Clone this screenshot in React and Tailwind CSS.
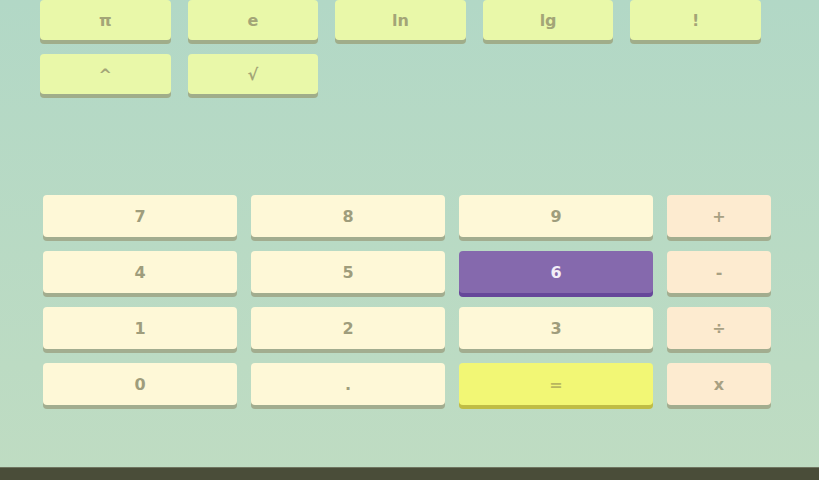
import React from "react";

const fnRows = [
  ["π", "e", "ln", "lg", "!"],
  ["^", "√"],
];

const numRows = [
  ["7", "8", "9", "+"],
  ["4", "5", "6", "-"],
  ["1", "2", "3", "÷"],
  ["0", ".", "=", "x"],
];

const keyStyle = (label, col) => {
  if (label === "6") return "bg-[#8569ad] text-[#f3eef8] shadow-[0_4px_0_#66479a]";
  if (label === "=") return "bg-[#f2f775] text-[#b9b65e] shadow-[0_4px_0_#bfbd45]";
  if (col === 3) return "bg-[#fdebd0] text-[#a8a082] shadow-[0_4px_0_#a2ad8f]";
  return "bg-[#fef8d7] text-[#9f9d7c] shadow-[0_4px_0_#a2ad8f]";
};

const App = () => {
  return (
    <div
      className="h-[480px] w-[819px] overflow-hidden flex flex-col bg-gradient-to-b from-[#b2d8c6] to-[#bfdcc2]"
      style={{ fontFamily: '"DejaVu Sans", Verdana, sans-serif' }}
    >
      {/* scientific keys */}
      <div className="px-[40px] flex flex-col gap-[14px] w-[801px]">
        {fnRows.map((row, i) => (
          <div key={i} className="grid grid-cols-5 gap-x-[17px]">
            {row.map((k) => (
              <button
                key={k}
                className="h-[40px] pt-[1px] rounded-[4px] bg-[#e9f8a9] text-[#a3a577] font-bold text-[16px] shadow-[0_4px_0_#a0ad8a] flex items-center justify-center"
              >
                {k}
              </button>
            ))}
          </div>
        ))}
      </div>

      {/* number pad */}
      <div className="mt-[101px] pl-[43px] grid grid-cols-[194px_194px_194px_104px] gap-x-[14px] gap-y-[14px]">
        {numRows.map((row) =>
          row.map((k, col) => (
            <button
              key={k}
              className={`h-[42px] pt-[1px] rounded-[4px] font-bold text-[16px] flex items-center justify-center ${keyStyle(k, col)}`}
            >
              {k}
            </button>
          ))
        )}
      </div>

      <div className="mt-auto h-[13px] bg-[#4a4d39] border-t border-[#6f7560]" />
    </div>
  );
};

export default App;
